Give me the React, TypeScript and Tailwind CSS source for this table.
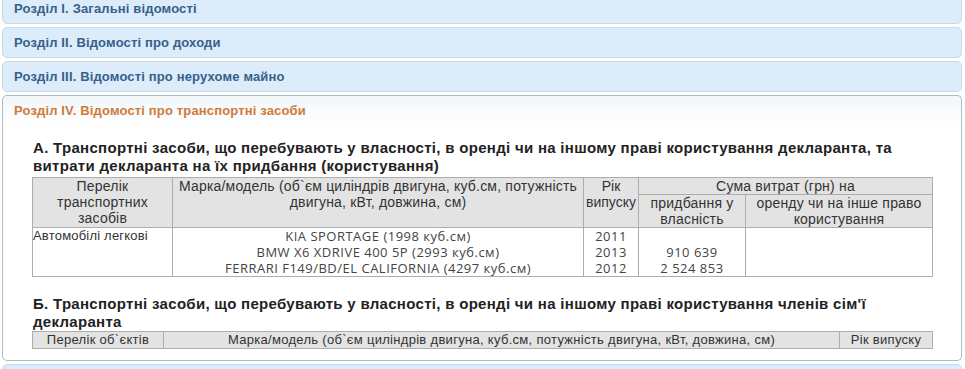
import type { ReactNode } from 'react';

const sections = [
  'Розділ I. Загальні відомості',
  'Розділ II. Відомості про доходи',
  'Розділ III. Відомості про нерухоме майно',
];

function Header({ children }: { children: ReactNode }) {
  return (
    <div className="mt-[3px] h-[31px] flex items-center pl-[11px] rounded-[5px] border border-[#c5dbec] bg-[#dcecfa] text-[13px] font-bold tracking-[0.15px] text-[#36618a]">
      {children}
    </div>
  );
}

const th = 'border border-[#adadad] bg-[#e3e3e3] font-normal text-[#333] text-center align-top px-[1px] leading-[16px]';
const td = 'border border-[#adadad] align-top leading-[16px]';
const data = "text-center text-[13px] tracking-[0.5px] text-[#444] font-['Open_Sans',sans-serif] font-normal";

export default function App() {
  return (
    <div className="bg-white min-h-[369px] -mt-[10px] pl-[2px] pr-[3px] font-['Liberation_Sans',Arial,sans-serif] overflow-hidden">
      {sections.map((s) => (
        <Header key={s}>{s}</Header>
      ))}

      <div className="mt-[3px] h-[31px] flex items-center pl-[11px] rounded-t-[5px] border border-b-0 border-[#a9bec6] bg-gradient-to-b from-[#f2f7fa] to-white text-[13px] font-bold tracking-[0.15px] text-[#d07a3a]">
        Розділ IV. Відомості про транспортні засоби
      </div>
      <div className="border border-t-0 border-[#a9bec6] rounded-b-[5px] bg-white pt-[13px] pb-[11px] pl-[29px] pr-[28px]">
        <h3 className="text-[15px] font-bold leading-[18px] text-[#222] tracking-[0.3px] mb-[2px] pl-[1px]">
          А. Транспортні засоби, що перебувають у власності, в оренді чи на іншому праві користування декларанта, та витрати декларанта на їх придбання (користування)
        </h3>
        <table className="w-[900px] border-collapse text-[14px] tracking-[0.2px] table-fixed">
          <colgroup>
            <col className="w-[140px]" />
            <col className="w-[411px]" />
            <col className="w-[55px]" />
            <col className="w-[107px]" />
            <col className="w-[187px]" />
          </colgroup>
          <thead>
            <tr>
              <th rowSpan={2} className={th}>Перелік транспортних засобів</th>
              <th rowSpan={2} className={th}>Марка/модель (об`єм циліндрів двигуна, куб.см, потужність двигуна, кВт, довжина, см)</th>
              <th rowSpan={2} className={`${th} tracking-normal`}>Рік випуску</th>
              <th colSpan={2} className={th}>Сума витрат (грн) на</th>
            </tr>
            <tr>
              <th className={th}>придбання у власність</th>
              <th className={th}>оренду чи на інше право користування</th>
            </tr>
          </thead>
          <tbody>
            <tr>
              <td className={`${td} text-left text-[13px] text-[#333]`}>Автомобілі легкові</td>
              <td className={`${td} ${data}`}>
                KIA SPORTAGE (1998 куб.см)
                <br />
                BMW X6 XDRIVE 400 5P (2993 куб.см)
                <br />
                FERRARI F149/BD/EL CALIFORNIA (4297 куб.см)
              </td>
              <td className={`${td} ${data}`}>
                2011
                <br />
                2013
                <br />
                2012
              </td>
              <td className={`${td} ${data}`}>
                <br />
                910 639
                <br />
                2 524 853
              </td>
              <td className={td}></td>
            </tr>
          </tbody>
        </table>

        <h3 className="mt-[18px] text-[15px] font-bold leading-[18px] text-[#222] tracking-[0.3px] pl-[1px]">
          Б. Транспортні засоби, що перебувають у власності, в оренді чи на іншому праві користування членів сім'ї декларанта
        </h3>
        <table className="w-[900px] border-collapse text-[13px] tracking-[0.3px] table-fixed">
          <colgroup>
            <col className="w-[131px]" />
            <col className="w-[676px]" />
            <col className="w-[93px]" />
          </colgroup>
          <thead>
            <tr>
              <th className={th}>Перелік об`єктів</th>
              <th className={th}>Марка/модель (об`єм циліндрів двигуна, куб.см, потужність двигуна, кВт, довжина, см)</th>
              <th className={th}>Рік випуску</th>
            </tr>
          </thead>
        </table>
      </div>

      <div className="mt-[3px] h-[31px] rounded-[5px] border border-[#c5dbec] bg-[#dcecfa]" />
    </div>
  );
}
